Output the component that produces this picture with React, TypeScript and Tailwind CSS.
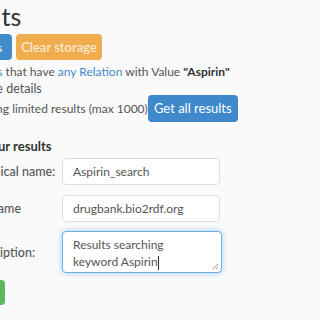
import React from 'react';

const font = { fontFamily: 'Lato, "Open Sans", sans-serif' };

export default function App() {
  return (
    <div
      className="w-[320px] h-[320px] overflow-hidden bg-[#fafafa] text-[#555] text-[12.5px] leading-[17px]"
      style={font}
    >
      <div className="pt-[1px] whitespace-nowrap">
        <h1 className="-ml-[131px] text-[25px] leading-[30px] text-[#333] font-normal">Search results</h1>

        <div className="flex gap-[4px] mt-[3px] -ml-[70px]">
          <button className="w-[82px] h-[26px] rounded-[4px] bg-[#428bca] text-white text-[12px]">
            Save results
          </button>
          <button className="h-[26px] w-[86px] rounded-[4px] bg-[#f0ad4e] text-[#fbe9cf] text-[13px] font-semibold">
            Clear storage
          </button>
        </div>

        <p className="mt-[3px] -ml-[47px] text-[12px]">
          <a className="text-[#428bca]">Concepts</a> that have <a className="text-[#428bca]">any Relation</a> with Value{' '}
          <b className="text-[#333]">"Aspirin"</b>
        </p>
        <p className="-ml-[17px]">See details</p>

        <div className="flex items-center -mt-[2px] -ml-[36px]">
          <span className="text-[12px]">Showing limited results (max 1000)</span>
          <button className="h-[27px] w-[90px] rounded-[4px] bg-[#3f88cc] text-white text-[13px]">
            Get all results
          </button>
        </div>

        <h4 className="mt-[16px] font-bold text-[#333] text-[13px] -ml-[46px]">Save your results</h4>

        <div className="mt-[3px] flex flex-col gap-[10px] text-[12px]">
          <div className="flex items-center -ml-[32px]">
            <label className="w-[94px] font-medium text-[12.5px]">Technical name:</label>
            <div className="w-[158px] h-[27px] border border-[#ddd] rounded-[4px] bg-white px-[10px] flex items-center">
              Aspirin_search
            </div>
          </div>
          <div className="flex items-center -ml-[32px]">
            <label className="w-[94px] font-medium text-[12.5px]">File name</label>
            <div className="w-[158px] h-[27px] border border-[#ddd] rounded-[4px] bg-white px-[10px] flex items-center">
              drugbank.bio2rdf.org
            </div>
          </div>
          <div className="flex items-center -ml-[32px] -mt-[1px]">
            <label className="w-[94px] font-medium text-[12.5px]">Description:</label>
            <div className="relative w-[160px] h-[42px] border border-[#66afe9] rounded-[4px] bg-white px-[10px] pt-[4px] leading-[17px] shadow-[0_0_6px_rgba(102,175,233,0.6)]">
              Results searching
              <br />
              keyword Aspirin<span className="inline-block w-px h-[14px] bg-[#333] align-middle" />
              <svg className="absolute right-[2px] bottom-[2px]" width="7" height="7" viewBox="0 0 7 7">
                <path d="M1 6 L6 1 M4 6 L6 4" stroke="#999" strokeWidth="1" />
              </svg>
            </div>
          </div>
        </div>

        <button className="mt-[7px] -ml-[60px] w-[65px] h-[25px] rounded-[4px] bg-[#5cb85c] text-white text-[12px]">
          Save
        </button>
      </div>
    </div>
  );
}
